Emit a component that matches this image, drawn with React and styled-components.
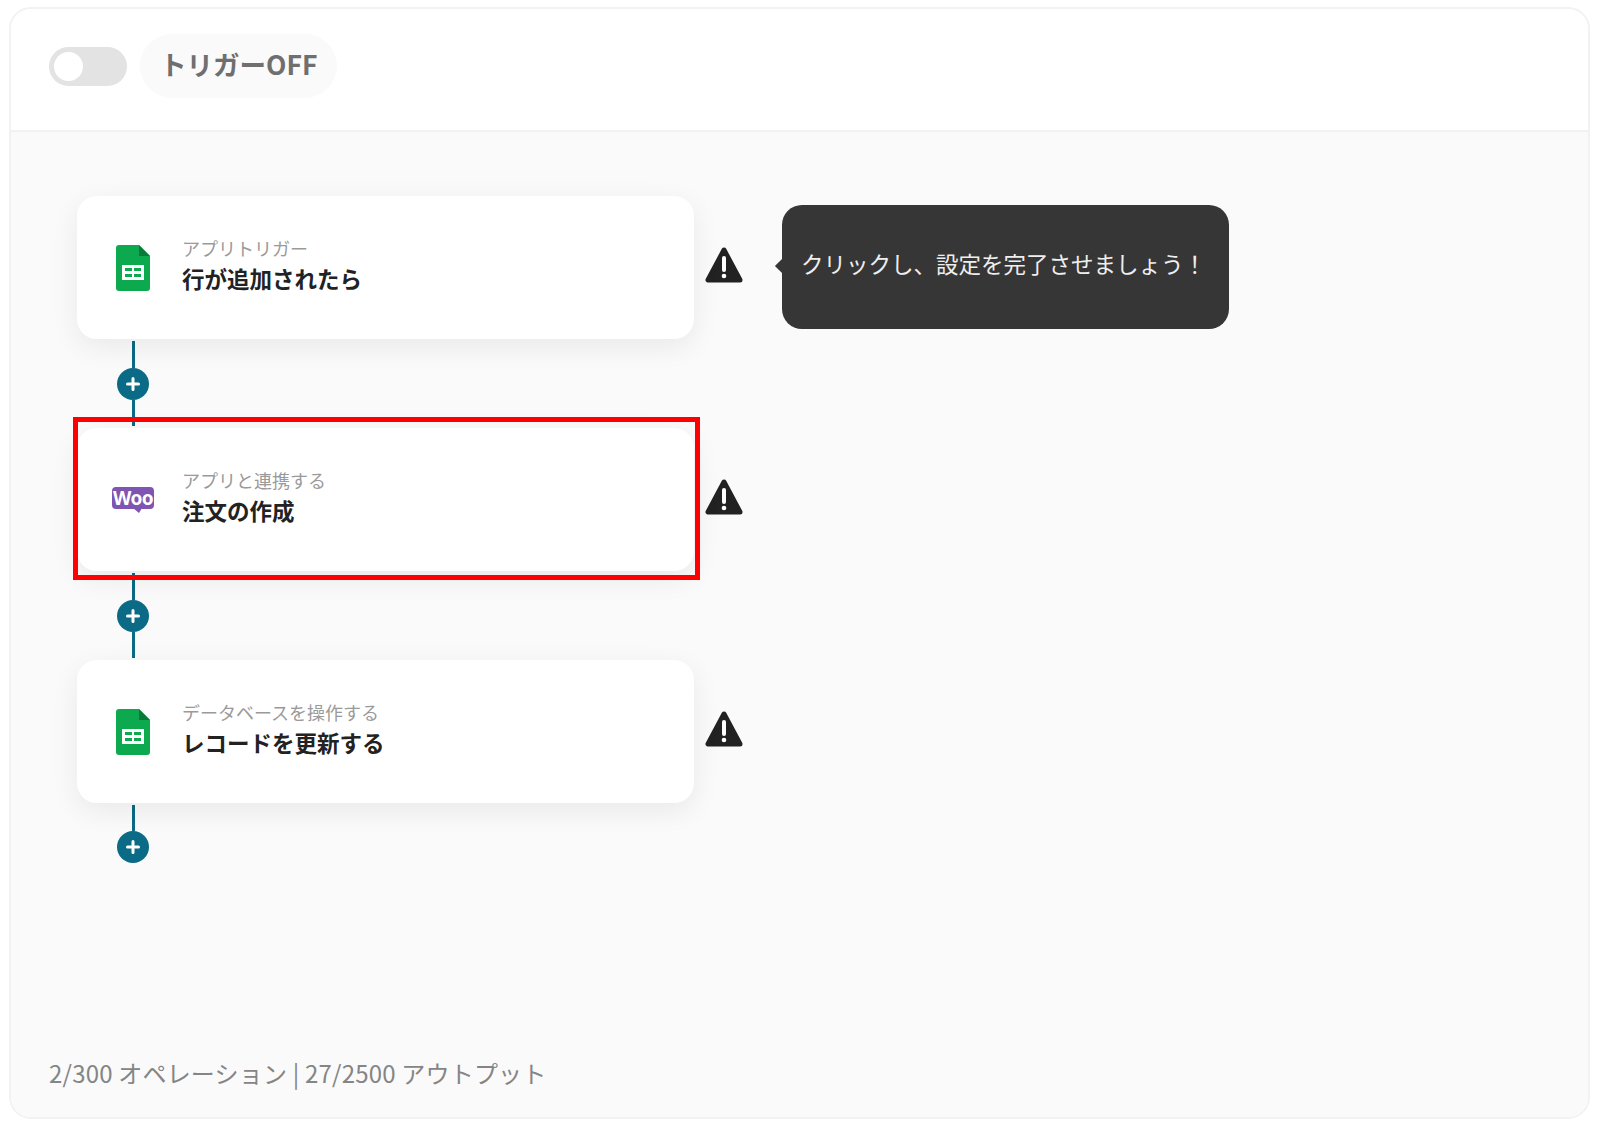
import styled, { createGlobalStyle } from "styled-components";

const GlobalStyle = createGlobalStyle`
  html, body {
    margin: 0;
    background: #fff;
    font-family: "Noto Sans CJK JP", "Noto Sans", sans-serif;
  }
`;

const Panel = styled.div`
  box-sizing: border-box;
  width: 1581px;
  height: 1112px;
  margin: 7px 9px 4px;
  display: flex;
  flex-direction: column;
  border: 2px solid #f2f2f2;
  border-radius: 22px;
  overflow: hidden;
`;

const Header = styled.div`
  box-sizing: border-box;
  height: 123px;
  flex: none;
  display: flex;
  align-items: center;
  gap: 13px;
  padding: 0 0 8px 38px;
  background: #fff;
  border-bottom: 2px solid #f2f2f2;
`;

const Toggle = styled.div`
  box-sizing: border-box;
  width: 78px;
  height: 39px;
  margin-top: 2px;
  padding: 5px;
  border-radius: 20px;
  background: #e3e3e3;
`;

const Knob = styled.div`
  width: 29px;
  height: 29px;
  border-radius: 50%;
  background: #fff;
`;

const TriggerPill = styled.div`
  box-sizing: border-box;
  height: 64px;
  padding: 0 20px 4px;
  display: flex;
  align-items: center;
  border-radius: 32px;
  background: #fafafa;
  color: #6f6f6f;
  font-size: 26.5px;
  font-weight: 700;
`;

const Canvas = styled.div`
  flex: 1;
  display: flex;
  flex-direction: column;
  padding: 64px 0 0 66px;
  background: #fafafa;
`;

const Row = styled.div`
  display: flex;
  align-items: center;
`;

const Card = styled.div`
  position: relative;
  box-sizing: border-box;
  width: 617px;
  height: 143px;
  display: flex;
  align-items: center;
  gap: 20px;
  padding-left: 27px;
  border-radius: 20px;
  background: #fff;
  box-shadow: 0 8px 28px rgba(0, 0, 0, 0.07);

  ${(p) =>
    p.$highlighted &&
    `&::after {
      content: "";
      position: absolute;
      inset: -11px -6px -9px -4px;
      border: 5px solid #ff0000;
    }`}
`;

const IconSlot = styled.div`
  width: 58px;
  display: flex;
  justify-content: center;
  align-items: center;
`;

const WooBubble = styled.div`
  position: relative;
  box-sizing: border-box;
  width: 42px;
  height: 22px;
  margin-top: -4px;
  display: flex;
  align-items: center;
  justify-content: center;
  border-radius: 4px;
  background: #7f54b3;
  color: #fff;
  font-family: "Noto Sans", sans-serif;
  font-size: 19px;
  font-weight: 700;
  letter-spacing: -0.6px;
  line-height: 22px;

  &::after {
    content: "";
    position: absolute;
    left: 21px;
    bottom: -4px;
    border-top: 5px solid #7f54b3;
    border-left: 6px solid transparent;
    border-right: 3px solid transparent;
  }
`;

const CardText = styled.div`
  display: flex;
  flex-direction: column;
  gap: 0;
  margin-top: -6px;
`;

const CardLabel = styled.div`
  font-size: 18px;
  line-height: 27px;
  color: #9a9a9a;
`;

const CardTitle = styled.div`
  font-size: 22.5px;
  line-height: 32px;
  font-weight: 700;
  color: #222;
`;

const WarningWrap = styled.div`
  width: 38px;
  height: 36px;
  margin: -6px 0 0 11px;
`;

const Tooltip = styled.div`
  position: relative;
  box-sizing: border-box;
  width: 447px;
  height: 124px;
  margin: -2px 0 0 39px;
  padding: 0 0 8px 19px;
  display: flex;
  align-items: center;
  border-radius: 20px;
  background: #363636;
  color: #eee;
  font-size: 22.5px;
  white-space: nowrap;

  &::before {
    content: "";
    position: absolute;
    left: -5px;
    top: 56px;
    width: 10px;
    height: 10px;
    background: #363636;
    transform: rotate(45deg);
  }
`;

const Connector = styled.div`
  width: 32px;
  height: ${(p) => p.$height}px;
  margin-left: 40px;
  display: flex;
  flex-direction: column;
  align-items: center;
`;

const Line = styled.div`
  flex: 1;
  width: 3px;
  background: #0b6a85;
  margin: ${(p) => (p.$top ? "2px 0 0" : "0 0 2px")};
`;

const AddButton = styled.div`
  width: 32px;
  height: 32px;
  flex: none;
  display: flex;
  align-items: center;
  justify-content: center;
  border-radius: 50%;
  background: #0b6a85;
`;

const Footer = styled.div`
  margin-top: auto;
  margin-left: -28px;
  padding-bottom: 26px;
  font-size: 24px;
  line-height: 36px;
  letter-spacing: 0.2px;
  color: #858585;
`;

const SheetsIcon = () => (
  <svg width="34" height="46" viewBox="0 0 34 46">
    <path d="M3 0h20l11 11v32a3 3 0 0 1-3 3H3a3 3 0 0 1-3-3V3a3 3 0 0 1 3-3z" fill="#0da94e" />
    <path d="M23 0l11 11H23z" fill="#0a7a38" />
    <path d="M6 20h22v15H6z" fill="#fff" />
    <path d="M9 23h7v3H9zM18 23h7v3h-7zM9 29h7v3H9zM18 29h7v3h-7z" fill="#0da94e" />
  </svg>
);

const WarningIcon = () => (
  <svg width="38" height="36" viewBox="0 0 38 36">
    <path
      d="M19 3L3 33h32z"
      fill="#222"
      stroke="#222"
      strokeWidth="5"
      strokeLinejoin="round"
    />
    <path d="M19 11v12" stroke="#fff" strokeWidth="4" strokeLinecap="round" />
    <circle cx="19" cy="29" r="2.3" fill="#fff" />
  </svg>
);

const PlusIcon = () => (
  <svg width="14" height="14" viewBox="0 0 14 14">
    <path d="M7 1.5v11M1.5 7h11" stroke="#fff" strokeWidth="3" strokeLinecap="round" />
  </svg>
);

const Plus = ({ height, last }) => (
  <Connector $height={height}>
    <Line $top />
    <AddButton>
      <PlusIcon />
    </AddButton>
    {!last && <Line />}
  </Connector>
);

const steps = [
  { icon: <SheetsIcon />, label: "アプリトリガー", title: "行が追加されたら" },
  { icon: <WooBubble>Woo</WooBubble>, label: "アプリと連携する", title: "注文の作成", highlighted: true },
  { icon: <SheetsIcon />, label: "データベースを操作する", title: "レコードを更新する" },
];

export default function App() {
  return (
    <>
      <GlobalStyle />
      <Panel>
        <Header>
          <Toggle>
            <Knob />
          </Toggle>
          <TriggerPill>トリガーOFF</TriggerPill>
        </Header>
        <Canvas>
          {steps.map((step, i) => (
            <div key={step.label}>
              <Row>
                <Card $highlighted={step.highlighted}>
                  <IconSlot>{step.icon}</IconSlot>
                  <CardText>
                    <CardLabel>{step.label}</CardLabel>
                    <CardTitle>{step.title}</CardTitle>
                  </CardText>
                </Card>
                <WarningWrap>
                  <WarningIcon />
                </WarningWrap>
                {i === 0 && <Tooltip>クリックし、設定を完了させましょう！</Tooltip>}
              </Row>
              {i < 2 ? <Plus height={89} /> : <Plus height={60} last />}
            </div>
          ))}
          <Footer>2/300 オペレーション | 27/2500 アウトプット</Footer>
        </Canvas>
      </Panel>
    </>
  );
}
